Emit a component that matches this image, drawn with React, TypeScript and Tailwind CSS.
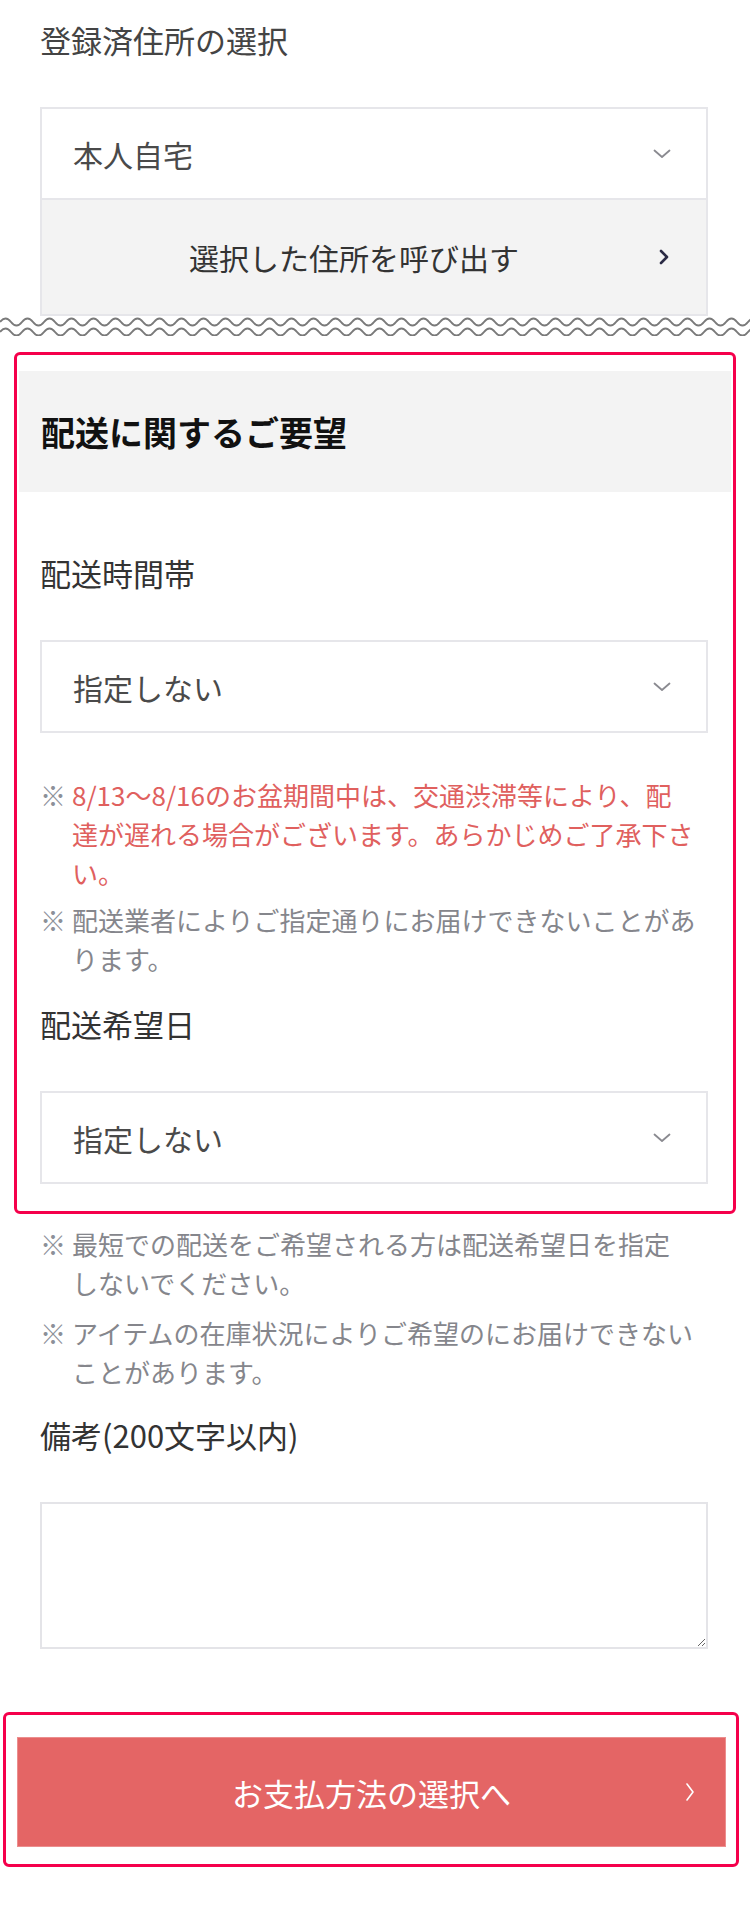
import { useState } from "react";

function ChevronDown() {
  return (
    <svg width="18" height="10" viewBox="0 0 18 10" fill="none">
      <polyline points="1.5,1.5 9,8 16.5,1.5" stroke="#8a8a90" strokeWidth="1.8" strokeLinecap="round" strokeLinejoin="round" />
    </svg>
  );
}

function Wave() {
  // two zigzag-ish wavy lines across the full width
  const period = 22;
  const amp = 3.5;
  const line = (cy: number) => {
    let d = `M0 ${cy}`;
    for (let x = 0; x < 760; x += period) {
      d += ` Q${x + period / 4} ${cy - amp * 2} ${x + period / 2} ${cy} Q${x + (period * 3) / 4} ${cy + amp * 2} ${x + period} ${cy}`;
    }
    return d;
  };
  return (
    <svg width="750" height="20" viewBox="0 0 750 20" className="block">
      <path d={line(6)} stroke="#7a7a7a" strokeWidth="2" fill="none" />
      <path d={line(16)} stroke="#7a7a7a" strokeWidth="2" fill="none" />
    </svg>
  );
}

function SelectBox({ value }: { value: string }) {
  return (
    <div className="flex h-[93px] items-center justify-between border-2 border-[#e6e6ea] bg-white pl-[31px] pr-[35px]">
      <span className="text-[30px] leading-none text-[#4a4a4a]">{value}</span>
      <ChevronDown />
    </div>
  );
}

function Note({ children, red = false }: { children: React.ReactNode; red?: boolean }) {
  return (
    <div className="flex text-[26px] leading-[39px]">
      <span className="w-[32px] shrink-0 text-[#8c9099]">※</span>
      <p className={red ? "text-[#e0605e]" : "text-[#85868c]"}>{children}</p>
    </div>
  );
}

export default function App() {
  const [memo, setMemo] = useState("");

  return (
    <div className="w-[750px] bg-white pb-[38px] font-['Noto_Sans_CJK_JP',sans-serif]">
      {/* Registered address */}
      <div className="pl-[40px] pr-[42px] pt-[18px]">
        <h3 className="text-[31px] leading-[44px] text-[#444]">登録済住所の選択</h3>
        <div className="mt-[45px]">
          <SelectBox value="本人自宅" />
          <button className="relative flex h-[116px] w-full items-center justify-center border-2 border-t-0 border-[#e6e6ea] bg-[#f3f3f3] pr-[40px]">
            <span className="text-[30px] leading-none text-[#333]">選択した住所を呼び出す</span>
            <svg className="absolute right-[37px] top-1/2 -translate-y-1/2" width="10" height="16" viewBox="0 0 10 16" fill="none">
              <polyline points="2,2 8,8 2,14" stroke="#2b2b45" strokeWidth="2.6" strokeLinecap="round" strokeLinejoin="round" />
            </svg>
          </button>
        </div>
      </div>

      <Wave />

      {/* Delivery requests */}
      <div className="mx-[14px] mt-[16px] rounded-[6px] border-[3px] border-[#f5004b] px-[2px] pb-[27px] pt-[16px]">
        <div className="flex h-[121px] items-center bg-[#f3f3f3] pl-[22px]">
          <h2 className="text-[34px] font-bold leading-none text-[#111]">配送に関するご要望</h2>
        </div>
        <div className="pl-[21px] pr-[23px]">
          <h3 className="mt-[59px] text-[31px] leading-[44px] text-[#333]">配送時間帯</h3>
          <div className="mt-[45px]">
            <SelectBox value="指定しない" />
          </div>
          <div className="mt-[42px]">
            <Note red>
              8/13〜8/16のお盆期間中は、交通渋滞等により、配
              <br />
              達が遅れる場合がございます。あらかじめご了承下さ
              <br />
              い。
            </Note>
          </div>
          <div className="mt-[8px]">
            <Note>
              配送業者によりご指定通りにお届けできないことがあ
              <br />
              ります。
            </Note>
          </div>
          <h3 className="mt-[24px] text-[31px] leading-[44px] text-[#333]">配送希望日</h3>
          <div className="mt-[45px]">
            <SelectBox value="指定しない" />
          </div>
        </div>
      </div>

      <div className="pl-[40px] pr-[42px]">
        <div className="mt-[10px]">
          <Note>
            最短での配送をご希望される方は配送希望日を指定
            <br />
            しないでください。
          </Note>
        </div>
        <div className="mt-[11px]">
          <Note>
            アイテムの在庫状況によりご希望のにお届けできない
            <br />
            ことがあります。
          </Note>
        </div>
        <h3 className="mt-[22px] text-[31px] leading-[44px] text-[#333]">備考(200文字以内)</h3>
        <textarea
          value={memo}
          onChange={(e) => setMemo(e.target.value)}
          className="mt-[45px] block h-[147px] w-full border-2 border-[#e4e4e8] bg-white p-3 text-[26px] outline-none"
        />
      </div>

      {/* Next step */}
      <div className="ml-[3px] mt-[63px] w-[736px] rounded-[6px] border-[3px] border-[#f5004b] pb-[17px] pl-[11px] pr-[10px] pt-[22px]">
        <button className="relative flex h-[110px] w-full items-center justify-center border border-[#ec8e8e] bg-[#e46565]">
          <span className="text-[31px] leading-none text-white">お支払方法の選択へ</span>
          <svg className="absolute right-[30px] top-1/2 -translate-y-1/2" width="10" height="20" viewBox="0 0 10 20" fill="none">
            <polyline points="2,2 8,10 2,18" stroke="#ffffff" strokeWidth="1.6" strokeLinecap="round" strokeLinejoin="round" />
          </svg>
        </button>
      </div>
    </div>
  );
}
